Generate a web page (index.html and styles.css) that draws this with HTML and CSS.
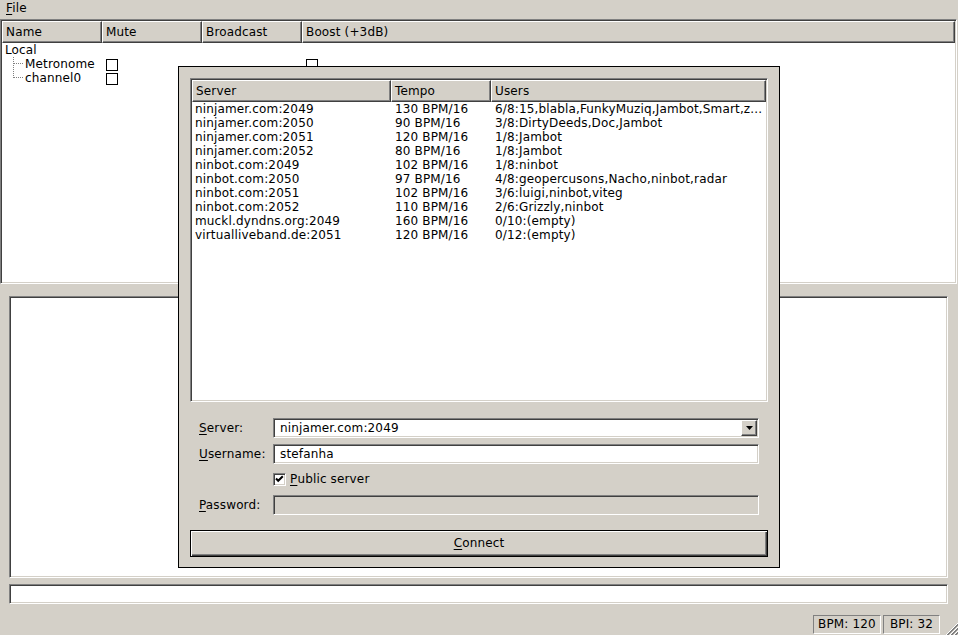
FILE: index.html
```html
<!DOCTYPE html>
<html lang="en">
<head>
  <meta charset="utf-8" />
  <title>NINJAM</title>
  <link rel="stylesheet" href="styles.css">
</head>
<body>
  <div id="main-window">

    <div class="menubar"><span class="menu-item"><u>F</u>ile</span></div>

    <div class="channels sunken">
      <div class="head">
        <div class="section">Name</div>
        <div class="section">Mute</div>
        <div class="section">Broadcast</div>
        <div class="section">Boost (+3dB)</div>
      </div>
      <div class="channel-list">
        <div class="channel">
          <div class="name">Local</div>
        </div>
        <div class="channel">
          <div class="name child">
            <svg class="twig" width="11" height="14"><path d="M0.5 0V14M1 6.5H10" /></svg>Metronome
          </div>
          <div class="cell"><span class="box"></span></div>
          <div class="cell"></div>
          <div class="cell"><span class="box"></span></div>
        </div>
        <div class="channel">
          <div class="name child">
            <svg class="twig" width="11" height="14"><path d="M0.5 0V7M1 6.5H10" /></svg>channel0
          </div>
          <div class="cell"><span class="box"></span></div>
          <div class="cell"></div>
          <div class="cell"><span class="box"></span></div>
        </div>
      </div>
    </div>

    <div class="chat sunken"></div>
    <div class="say sunken"></div>

    <div class="statusbar">
      <div class="panel bpm">BPM: 120</div>
      <div class="panel bpi">BPI: 32</div>
      <svg class="grip" width="12" height="12">
        <path class="hi" d="M12 0L0 12M12 4L4 12M12 8L8 12" />
        <path class="lo" d="M12 1L1 12M12 2L2 12M12 5L5 12M12 6L6 12M12 9L9 12M12 10L10 12" />
      </svg>
    </div>
  </div>

  <div class="dialog">
    <div class="servers sunken">
      <div class="head">
        <div class="section">Server</div>
        <div class="section">Tempo</div>
        <div class="section">Users</div>
      </div>
      <div class="server-list">
        <div class="server"><span>ninjamer.com:2049</span><span>130 BPM/16</span><span>6/8:15,blabla,FunkyMuziq,Jambot,Smart,z...</span></div>
        <div class="server"><span>ninjamer.com:2050</span><span>90 BPM/16</span><span>3/8:DirtyDeeds,Doc,Jambot</span></div>
        <div class="server"><span>ninjamer.com:2051</span><span>120 BPM/16</span><span>1/8:Jambot</span></div>
        <div class="server"><span>ninjamer.com:2052</span><span>80 BPM/16</span><span>1/8:Jambot</span></div>
        <div class="server"><span>ninbot.com:2049</span><span>102 BPM/16</span><span>1/8:ninbot</span></div>
        <div class="server"><span>ninbot.com:2050</span><span>97 BPM/16</span><span>4/8:geopercusons,Nacho,ninbot,radar</span></div>
        <div class="server"><span>ninbot.com:2051</span><span>102 BPM/16</span><span>3/6:luigi,ninbot,viteg</span></div>
        <div class="server"><span>ninbot.com:2052</span><span>110 BPM/16</span><span>2/6:Grizzly,ninbot</span></div>
        <div class="server"><span>muckl.dyndns.org:2049</span><span>160 BPM/16</span><span>0/10:(empty)</span></div>
        <div class="server"><span>virtualliveband.de:2051</span><span>120 BPM/16</span><span>0/12:(empty)</span></div>
      </div>
    </div>

    <form class="connect-form">
      <label><u>S</u>erver:</label>
      <div class="combo sunken">
        <span class="value">ninjamer.com:2049</span>
        <span class="drop"><svg width="7" height="4"><path d="M0 0H7L3.5 4Z" /></svg></span>
      </div>

      <label><u>U</u>sername:</label>
      <div class="field sunken"><span class="value">stefanha</span></div>

      <span></span>
      <label class="check">
        <span class="checkbox sunken"><svg width="9" height="9"><path d="M1 3.5L3.2 5.8L7.8 1.2" /></svg></span><u>P</u>ublic server
      </label>

      <label><u>P</u>assword:</label>
      <div class="field sunken disabled"></div>
    </form>

    <button class="connect" type="button"><u>C</u>onnect</button>
  </div>
</body>
</html>
```

FILE: styles.css
```css
html, body { margin: 0; padding: 0; font-family: "DejaVu Sans", Verdana, sans-serif; font-size: 12px; letter-spacing: 0.15px; color: #000; }
body { background: #d4d0c8; width: 958px; height: 635px; overflow: hidden; position: relative; }
u { text-decoration: underline; text-underline-offset: 2px; }

/* bevels, the old windows way */
.sunken {
    border: 1px solid;
    border-color: #808080 #fff #fff #808080;
    padding: 1px;
    box-shadow: inset 1px 1px #404040, inset -1px -1px #d4d0c8;
    box-sizing: border-box;
    background: #fff;
}
.section {
    border: 1px solid;
    border-color: #fff #404040 #404040 #fff;
    box-shadow: inset -1px -1px #808080;
    background: #d4d0c8;
    height: 22px;
    line-height: 20px;
    padding: 0 3px 0 3px;
    box-sizing: border-box;
    white-space: nowrap;
    overflow: hidden;
}

#main-window { display: flex; flex-direction: column; height: 635px; }
.menubar { height: 19px; box-sizing: border-box; padding: 2px 0 0 6px; line-height: 13px; flex: none; }

.channels { width: 957px; height: 265px; flex: none; display: flex; flex-direction: column; }
.channels .head, .channel { display: grid; grid-template-columns: 100px 100px 100px 1fr; }
.channel-list { flex: auto; }
.channel { height: 14px; line-height: 14px; }
.channel .name { padding-left: 3px; white-space: nowrap; }
.channel .name.child { padding-left: 11px; }
.twig { display: inline-block; vertical-align: top; margin-right: 1px; }
.twig path { stroke: #808080; stroke-width: 1; stroke-dasharray: 1 1; fill: none; shape-rendering: crispEdges; }
.cell { padding-left: 4px; }
.box { display: block; width: 12px; height: 12px; margin-top: 2px; border: 1px solid #000; box-sizing: border-box; background: #fff; }

.chat { height: 282px; margin: 12px 10px 0 9px; flex: none; }
.say { height: 20px; margin: 6px 10px 0 9px; flex: none; }

.statusbar { height: 31px; flex: none; display: flex; justify-content: flex-end; align-items: flex-end; padding-bottom: 1px; box-sizing: border-box; }
.panel {
    height: 19px;
    line-height: 17px;
    border: 1px solid;
    border-color: #808080 #fff #fff #808080;
    box-sizing: border-box;
    text-align: center;
}
.bpm { width: 68px; margin-right: 2px; }
.bpi { width: 57px; }
.grip { margin: 0 0 -1px 6px; }
.grip path { stroke-width: 1; shape-rendering: crispEdges; }
.grip .hi { stroke: #fff; }
.grip .lo { stroke: #808080; }

/* connect dialog, sits over the main window */
.dialog {
    position: absolute;
    left: 178px;
    top: 66px;
    width: 602px;
    border: 1px solid #000;
    background: #d4d0c8;
    padding: 11px 11px 10px;
    box-sizing: border-box;
}
.servers { height: 324px; display: flex; flex-direction: column; }
.servers .head, .server { display: grid; grid-template-columns: 199px 100px 1fr; }
.servers .section { padding-left: 3px; }
.server { height: 14px; line-height: 14px; white-space: nowrap; }
.server span { padding-left: 4px; overflow: hidden; }
.server span:first-child { padding-left: 3px; }

.connect-form {
    display: grid;
    grid-template-columns: 74px 486px;
    grid-template-rows: 20px 20px 19px 20px;
    row-gap: 6px;
    margin: 16px 0 0;
    padding: 0 9px;
    line-height: 20px;
}
.connect-form label { white-space: nowrap; }
.combo, .field { display: flex; height: 20px; }
.combo .value, .field .value { flex: auto; line-height: 16px; padding-left: 5px; white-space: nowrap; }
.field.disabled { background: #d4d0c8; }
.drop {
    flex: none;
    width: 16px;
    height: 16px;
    border: 1px solid;
    border-color: #fff #404040 #404040 #fff;
    box-shadow: inset -1px -1px #808080;
    background: #d4d0c8;
    box-sizing: border-box;
    display: flex;
    align-items: center;
    justify-content: center;
}
.drop svg { display: block; }
.drop path { fill: #000; }

.check { display: flex; align-items: flex-start; padding-top: 2px; line-height: 14px; }
.checkbox { width: 13px; height: 13px; margin: 1px 4px 0 0; flex: none; }
.checkbox svg { display: block; }
.checkbox path { stroke: #000; stroke-width: 2; fill: none; }

.connect {
    display: block;
    width: 100%;
    height: 27px;
    margin-top: 15px;
    border: 1px solid #000;
    background: #d4d0c8;
    box-shadow: inset 1px 1px #fff, inset -1px -1px #404040, inset -2px -2px #808080;
    font: inherit;
    letter-spacing: inherit;
    color: #000;
    padding: 0;
    line-height: 25px;
}
```
